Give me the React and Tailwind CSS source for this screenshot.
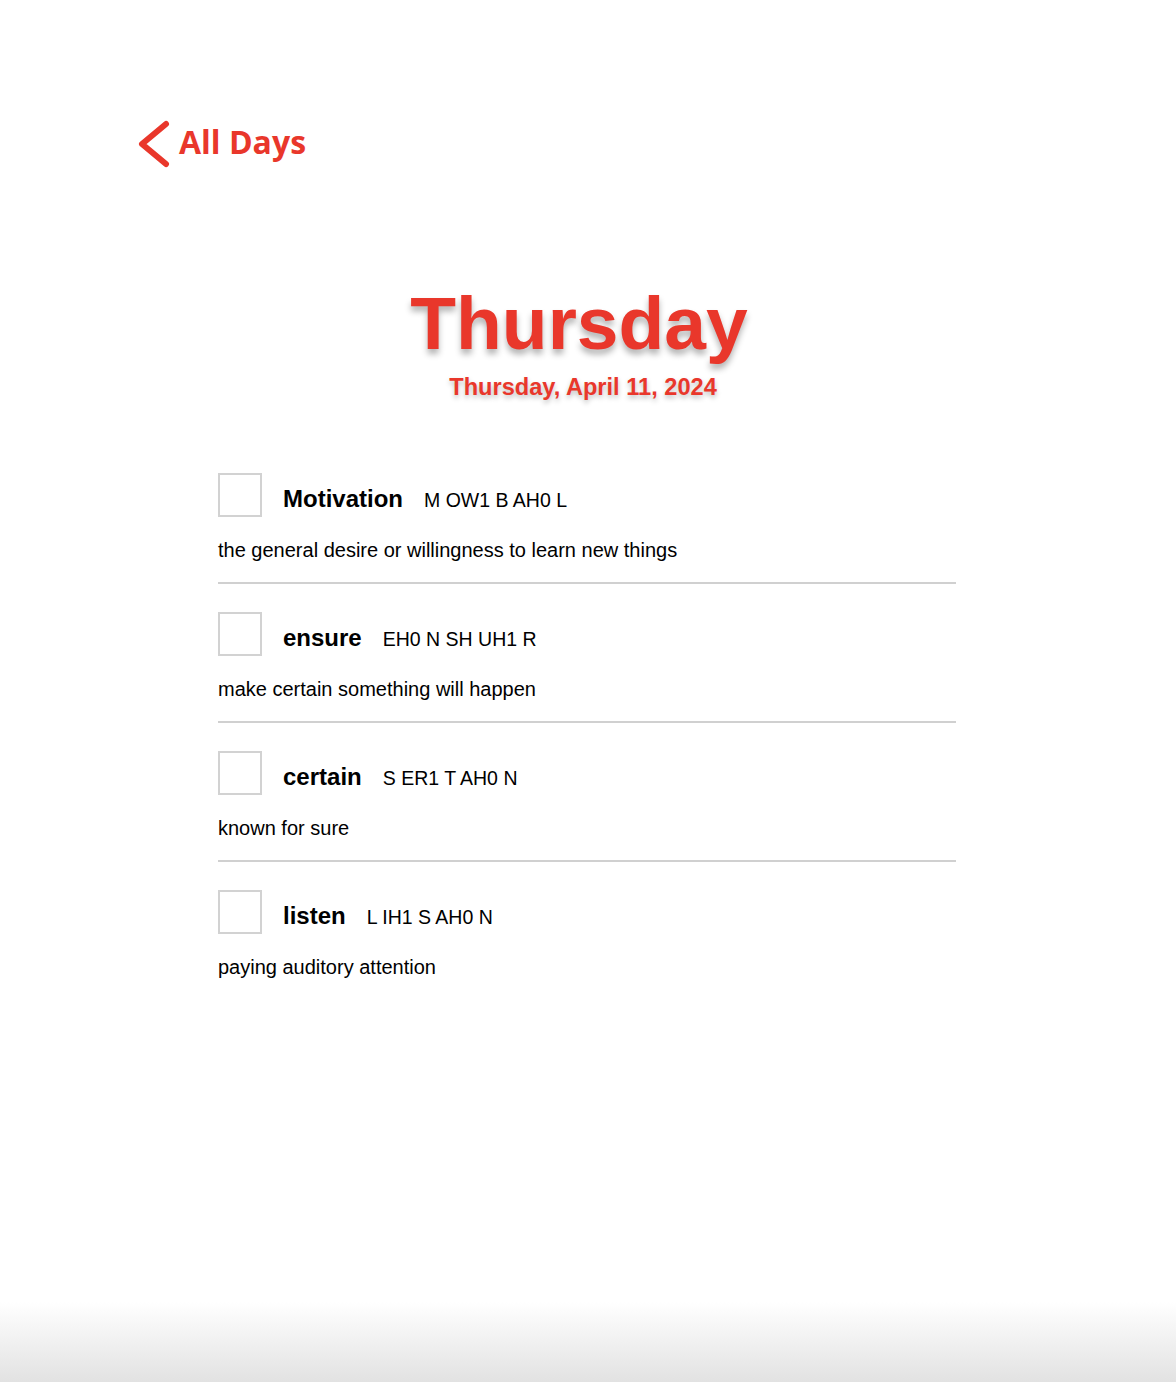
const WORDS = [
  { word: "Motivation", sound: "M OW1 B AH0 L", meaning: "the general desire or willingness to learn new things" },
  { word: "ensure", sound: "EH0 N SH UH1 R", meaning: "make certain something will happen" },
  { word: "certain", sound: "S ER1 T AH0 N", meaning: "known for sure" },
  { word: "listen", sound: "L IH1 S AH0 N", meaning: "paying auditory attention" },
];

export default function App() {
  return (
    <div className="flex min-h-[1382px] flex-col bg-white font-['Liberation_Sans',Arial,sans-serif] text-black">
      <div className="flex pl-[136px] pt-[118px]">
        <a href="#" className="flex items-center gap-[7px] text-[#e9372b] no-underline">
          <svg width="36" height="52" viewBox="0 0 36 52" fill="none" aria-hidden>
            <path d="M30 6 L6 26 L30 46" stroke="#e9372b" strokeWidth="6" strokeLinecap="round" strokeLinejoin="round" />
          </svg>
          <span className="pb-[5px] font-['Open_Sans',sans-serif] text-[32px] font-bold leading-none">All Days</span>
        </a>
      </div>

      <div className="mt-[116px] flex flex-col items-center text-[#e9372b]">
        <h1 className="pr-[18px] text-[75px] font-bold leading-none [text-shadow:0_5px_6px_rgba(0,0,0,0.3)]">Thursday</h1>
        <p className="mt-[15px] pr-[10px] text-[23.6px] font-bold leading-none [text-shadow:0_3px_5px_rgba(0,0,0,0.25)]">
          Thursday, April 11, 2024
        </p>
      </div>

      <div className="mt-[73px] pl-[218px]">
        <div className="w-[738px]">
          {WORDS.map((w, i) => (
            <div
              key={w.word}
              className={
                i < WORDS.length - 1
                  ? "border-b-2 border-[#d0d0d0] pb-[22px] " + (i > 0 ? "pt-[28px]" : "")
                  : "pt-[28px]"
              }
            >
              <div className="flex items-start gap-[21px]">
                <div className="h-[44px] w-[44px] shrink-0 border-2 border-[#d2d2d2] bg-white" />
                <div className="mt-[14px] flex items-baseline gap-[21px]">
                  <span className="text-[24px] font-bold leading-none">{w.word}</span>
                  <span className="text-[19.5px] leading-none">{w.sound}</span>
                </div>
              </div>
              <p className="mt-[23px] text-[20px] leading-none">{w.meaning}</p>
            </div>
          ))}
        </div>
      </div>

      <div className="mt-auto h-[80px] bg-linear-to-b from-white to-[#e2e2e2]" />
    </div>
  );
}
